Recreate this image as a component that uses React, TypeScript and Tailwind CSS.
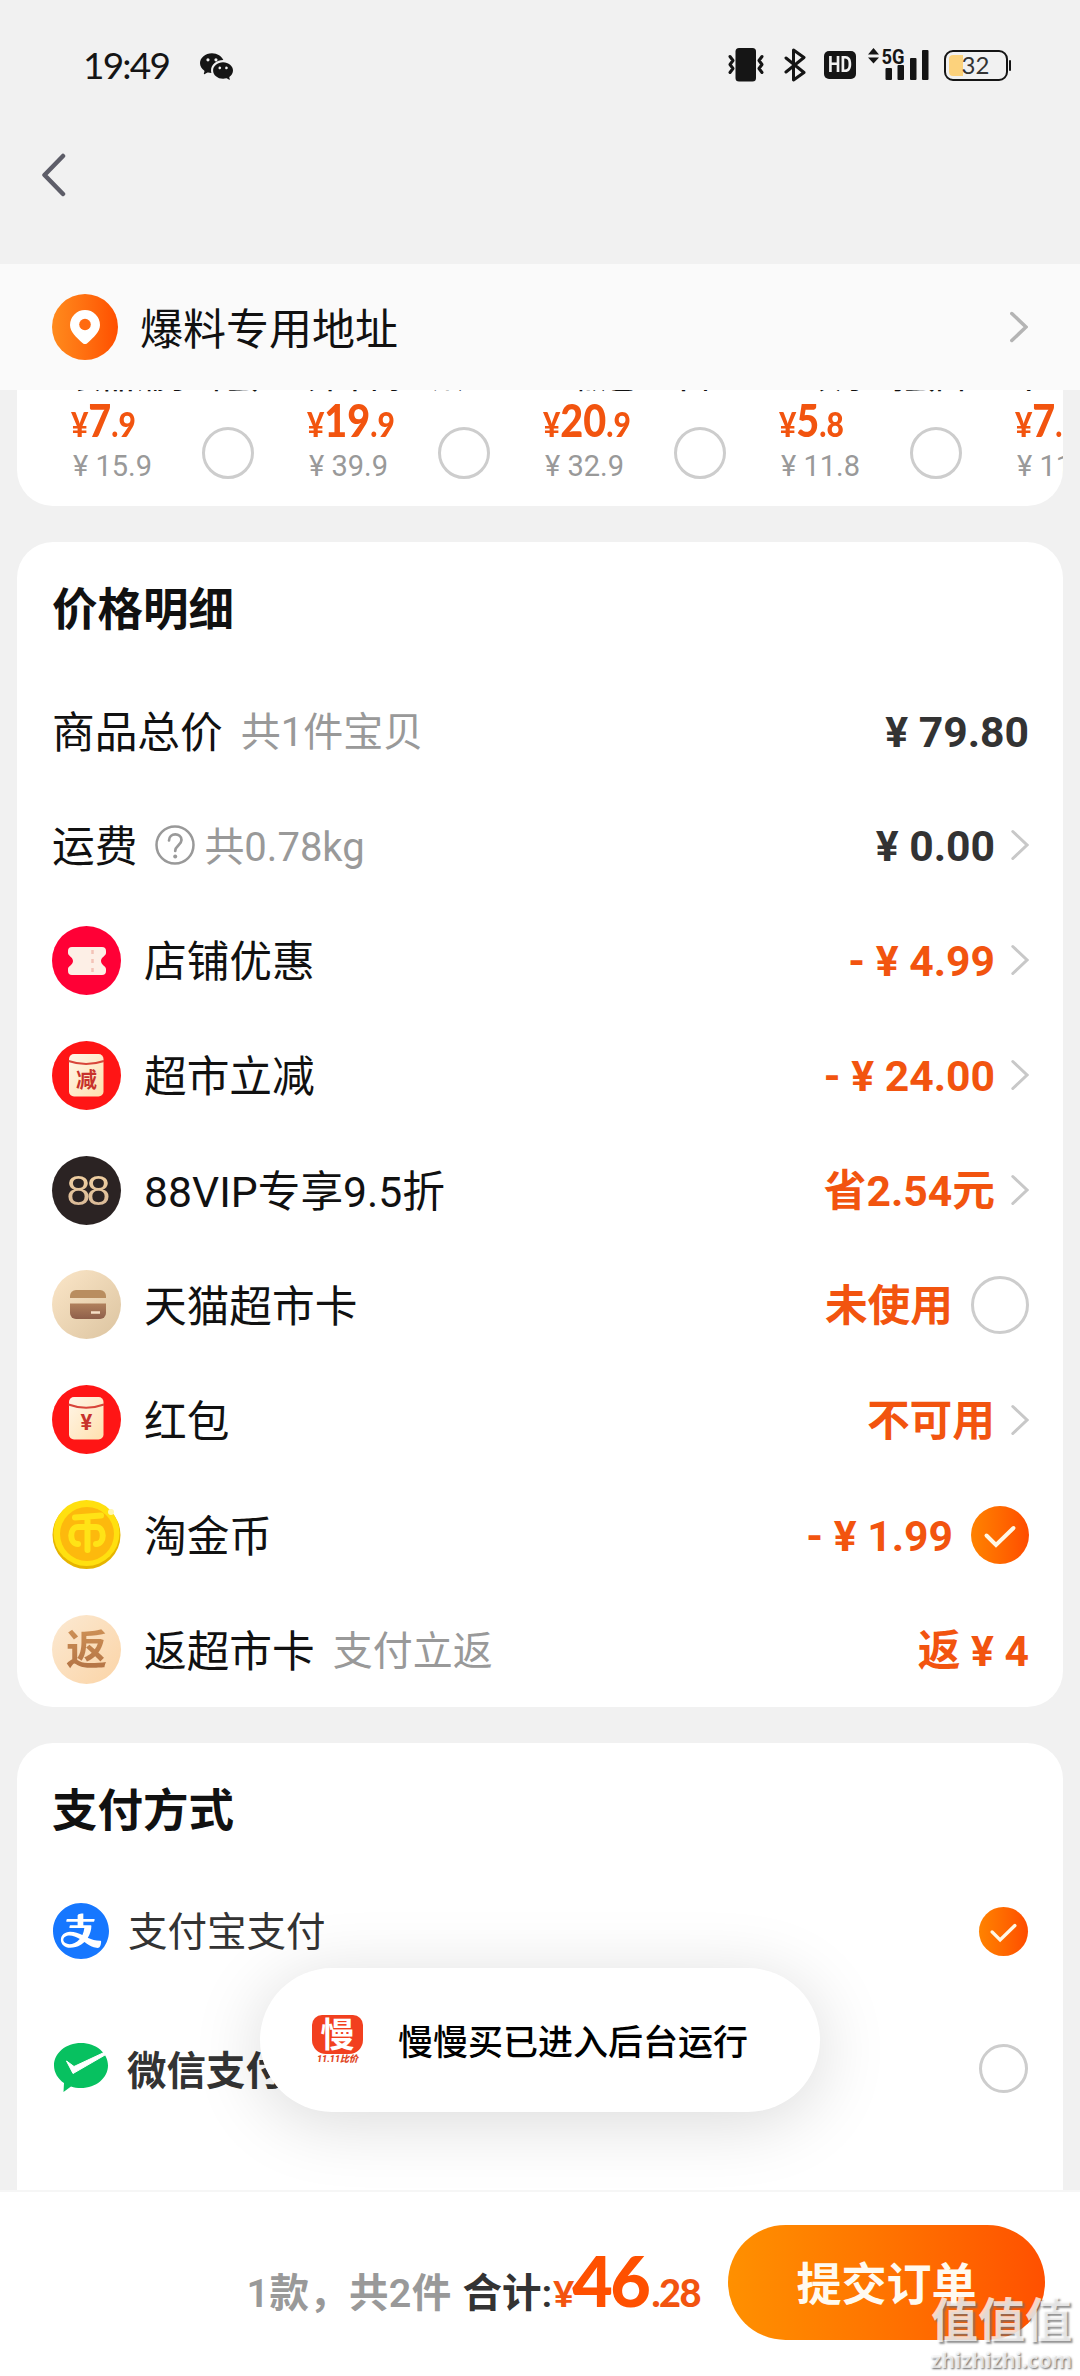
import type { ReactNode } from "react";
import { AiFillAlipayCircle } from "react-icons/ai";
import { BsWechat } from "react-icons/bs";

type Product = { name: string; int: string; dec: string; old: string };

const products: Product[] = [
  { name: "食品铺子虾蛋", int: "7", dec: ".9", old: "15.9" },
  { name: "卉牛肉丝爪", int: "19", dec: ".9", old: "39.9" },
  { name: "生椒巴旦不但", int: "20", dec: ".9", old: "32.9" },
  { name: "三灰小鸡蛋面", int: "5", dec: ".8", old: "11.8" },
  { name: "卜卦", int: "7", dec: ".9", old: "11.9" },
];

const IconChevron = ({ className = "text-[#c8c8c8]", width = 3 }: { className?: string; width?: number }) => (
  <svg viewBox="0 0 18 32" fill="none" className={`h-8 w-[18px] shrink-0 ${className}`}>
    <path d="M1.8 2.5 16 16 1.8 29.5" stroke="currentColor" strokeWidth={width} strokeLinecap="round" />
  </svg>
);

const Radio = ({ className }: { className: string }) => (
  <div className={`shrink-0 rounded-full border-[3px] border-[#cdcdcd] bg-white ${className}`} />
);

const Checked = ({ className }: { className: string }) => (
  <div
    className={`flex shrink-0 items-center justify-center rounded-full bg-linear-to-r from-[#ff8200] to-[#ff4b00] ${className}`}
  >
    <svg viewBox="0 0 58 58" fill="none" className="size-full">
      <path d="M15.5 29.5 25 39 42.5 22" stroke="#fff8e6" strokeWidth="4" strokeLinecap="round" />
    </svg>
  </div>
);

const IconTicket = () => (
  <svg viewBox="0 0 69 69" className="size-[69px]">
    <circle cx="34.5" cy="34.5" r="34.5" fill="#ff0036" />
    <path
      d="M20 21h30a4 4 0 0 1 4 4v2c0 3-5 4-5 8s5 5 5 8v2a4 4 0 0 1-4 4H20a4 4 0 0 1-4-4v-2c0-3 5-4 5-8s-5-5-5-8v-2a4 4 0 0 1 4-4z"
      fill="#fdefe6"
    />
    <path d="M40.500 24v23" stroke="#f3c3b8" strokeWidth="2.500" strokeDasharray="4 5" />
  </svg>
);

const IconPacket = ({ label, dy = 0 }: { label: string; dy?: number }) => (
  <svg viewBox="0 0 69 69" className="size-[69px]">
    <defs>
      <linearGradient id="packet" x1="0" y1="0" x2="1" y2="1">
        <stop offset="0" stopColor="#fff6e8" />
        <stop offset="1" stopColor="#ffe0ae" />
      </linearGradient>
    </defs>
    <circle cx="34.500" cy="34.500" r="34.500" fill="#ff1515" />
    <rect x="17" y={13 + dy} width="34.500" height="42.500" rx="5" fill="url(#packet)" />
    <path d={dy ? "M16.500 19.500Q34 26 52 19.500" : "M16.500 20Q34 26 52 20"} stroke="#d8453a" strokeWidth="2" fill="none" />
    <text
      x="34.500"
      y={label === "减" ? 46 : 45}
      textAnchor="middle"
      fontSize={label === "减" ? 21 : 22}
      fontWeight="700"
      fill="#c8322c"
      className="font-['Roboto','Noto_Sans_CJK_SC',sans-serif]"
    >
      {label}
    </text>
  </svg>
);

const Icon88 = () => (
  <div className="flex size-[69px] items-center justify-center rounded-full bg-[#2b2323]">
    <span className="bg-linear-to-b from-[#f7d6a4] to-[#d3b394] bg-clip-text px-1 font-['Liberation_Sans',sans-serif] text-[43px] leading-[48px] tracking-[-4px] text-transparent">
      88
    </span>
  </div>
);

const IconCard = () => (
  <svg viewBox="0 0 69 69" className="size-[69px]">
    <defs>
      <linearGradient id="cardBg" x1="0" y1="0" x2="1" y2="1">
        <stop offset="0" stopColor="#fbe6c8" />
        <stop offset="1" stopColor="#dcc4a0" />
      </linearGradient>
      <linearGradient id="cardFg" x1="0" y1="0" x2="0" y2="1">
        <stop offset="0" stopColor="#b0805c" />
        <stop offset="1" stopColor="#8f5f4a" />
      </linearGradient>
    </defs>
    <circle cx="34.500" cy="34.500" r="34.500" fill="url(#cardBg)" />
    <path d="M18 28v-2a6 6 0 0 1 6-6h24a6 6 0 0 1 6 6v2z" fill="#b98d5f" />
    <path d="M18 33.500h36V43a6 6 0 0 1-6 6H24a6 6 0 0 1-6-6z" fill="url(#cardFg)" />
    <path d="M39 42.500h9" stroke="#f6dfc6" strokeWidth="2.500" />
  </svg>
);

const IconCoin = () => (
  <svg viewBox="0 0 69 69" className="size-[69px]">
    <circle cx="34.500" cy="35" r="34" fill="#e6b400" />
    <circle cx="34.500" cy="33" r="33" fill="#ffe00f" />
    <circle cx="35" cy="34" r="27" fill="#fdb90d" />
    <g stroke="#ffe316" strokeWidth="6" fill="none" strokeLinecap="round">
      <path d="M23 17.500 49 15.500M35.500 17v33" />
      <path d="M26 44c-9 0-9-17 0-17h18c9 0 9 17 0 17" />
    </g>
    <circle cx="59" cy="12" r="3" fill="#fff7b0" />
  </svg>
);

const IconReturn = () => (
  <div className="flex size-[69px] items-center justify-center rounded-full bg-linear-to-br from-[#fbe9d2] to-[#fbd4a6]">
    <span className="bg-linear-to-b from-[#cf9257] to-[#b07043] bg-clip-text text-[41px] leading-[48px] font-bold text-transparent">返</span>
  </div>
);

const IconWechatPay = () => (
  <svg viewBox="0 0 54 50" className="h-[50px] w-[54px]">
    <path
      d="M27 0c15 0 27 10 27 22.500S42 45 27 45c-3.500 0-7-.5-10-1.600L9.500 49l.5-9C4 36 0 29.500 0 22.500 0 10 12 0 27 0z"
      fill="#07c160"
    />
    <path d="M12.500 18 20 23.500 50 9.500 51 12 19 30.500z" fill="#fff" stroke="#fff" strokeLinejoin="round" />
  </svg>
);

const StatusBar = () => (
  <div className="flex h-[130px] items-center pr-[69px] pl-[83px]">
    <span className="w-[87px] font-['Lato',sans-serif] text-[37px] tracking-[-1.8px] whitespace-nowrap text-[#151515]">19:49</span>
    <BsWechat className="ml-[30px] size-[33px] text-[#151515]" />

    <div className="ml-auto flex items-center text-[#151515]">
      <svg viewBox="0 0 36 34" fill="none" className="h-[34px] w-9">
        <rect x="7.500" width="20.500" height="33.500" rx="3.500" fill="currentColor" />
        <path d="M2 8.500l3 4-3 4 3 4-3 4M34 8.500l-3 4 3 4-3 4 3 4" stroke="currentColor" strokeWidth="3" strokeLinecap="round" strokeLinejoin="round" />
      </svg>
      <svg viewBox="0 0 22 34" fill="none" className="ml-5 h-[34px] w-[22px]">
        <path d="M2 10 20 24.500 9.500 32V2L20 9.500 2 24" stroke="currentColor" strokeWidth="3" strokeLinecap="round" strokeLinejoin="round" />
      </svg>
      <span className="ml-[18px] flex h-7 w-8 items-center justify-center rounded-[5px] bg-[#151515] font-['Roboto',sans-serif] text-[22px] leading-none font-bold text-[#f1f1f1]">
        <span className="scale-x-80">HD</span>
      </span>
      <svg viewBox="0 0 61 34" fill="currentColor" className="ml-3 h-[34px] w-[61px] overflow-visible">
        <path d="M5.500 0 11 6.500H0zM5.500 15.500 11 9.500H0z" />
        <text x="13.500" y="15.500" fontSize="21" fontWeight="700" textLength="23" lengthAdjust="spacingAndGlyphs" className="font-['Roboto',sans-serif]">
          5G
        </text>
        <rect x="17.500" y="20" width="6.500" height="12" rx="1" />
        <rect x="29.500" y="17" width="6.500" height="15" rx="1" />
        <rect x="42" y="10" width="6.500" height="22" rx="1" />
        <rect x="54" y="2" width="6.500" height="30" rx="1" />
      </svg>
      <div className="ml-[15px] flex h-[31px] w-[64px] items-center rounded-[9px] border-[2.5px] border-[#151515] pl-[3px]">
        <div className="h-[21px] w-[14px] rounded-l-[4px] bg-[#fcd27c]" />
        <span className="-ml-px font-['Lato',sans-serif] text-[24px] leading-none text-[#333]">32</span>
      </div>
      <div className="ml-px h-[11px] w-[2.5px] rounded-sm bg-[#151515]" />
    </div>
  </div>
);

const AddressBar = () => (
  <div className="flex h-[126px] items-center bg-[#fafafa] px-[52px]">
    <div className="flex size-[66px] items-center justify-center rounded-full bg-linear-to-r from-[#ff8a1c] to-[#ff4e00]">
      <svg viewBox="0 0 30 34" className="h-[34px] w-[30px]">
        <path d="M15 0a15 15 0 0 1 15 15c0 7-6.500 12.500-12.500 18a3.500 3.500 0 0 1-5 0C6.500 27.500 0 22 0 15A15 15 0 0 1 15 0z" fill="#fff" />
        <circle cx="15" cy="14.500" r="5.800" fill="#ff6a10" />
      </svg>
    </div>
    <span className="ml-[22px] pt-[6px] text-[43px] leading-none text-[#111]">爆料专用地址</span>
    <IconChevron className="ml-auto text-[#b4b4b4]" width={3.5} />
  </div>
);

const ProductCard = ({ name, int, dec, old }: Product) => (
  <div className="w-[236px] shrink-0">
    <p className="-mt-[31px] h-[38px] text-[31px] leading-[38px] font-medium whitespace-nowrap text-[#111]">{name}</p>
    <div className="relative">
      <p className="-ml-px h-[46px] origin-left scale-x-[0.88] font-['Lato',sans-serif] text-[34px] leading-[46px] font-black whitespace-nowrap text-[#f2540f]">
        ¥<span className="text-[45px]">{int}</span>
        {dec}
      </p>
      <p className="mt-[6px] pl-px text-[29px] leading-[34px] whitespace-nowrap text-[#999]">¥ {old}</p>
      <Radio className="absolute top-[30px] left-[130px] size-[52px]" />
    </div>
  </div>
);

type RowProps = {
  icon?: ReactNode;
  label: string;
  note?: string;
  help?: boolean;
  value: string;
  end?: "chevron" | "radio" | "checked";
  accent?: boolean;
};

const PriceRow = ({ icon, label, note, help, value, end, accent = true }: RowProps) => (
  <div className="flex flex-1 items-center">
    {icon && <div className="mr-[23px] shrink-0">{icon}</div>}
    <span className="pt-[5px] text-[42.7px] leading-none text-[#111]">{label}</span>
    {help && (
      <svg viewBox="0 0 40 40" fill="none" className="ml-[18px] size-10 text-[#999]">
        <circle cx="20" cy="20" r="18.500" stroke="currentColor" strokeWidth="2.500" />
        <path d="M14 15.500c0-8 12.500-8 12.500-.5 0 5-6.300 5.500-6.300 11" stroke="currentColor" strokeWidth="2.700" strokeLinecap="round" />
        <circle cx="20.200" cy="31.500" r="2" fill="currentColor" />
      </svg>
    )}
    {note && <span className={`pt-[5px] text-[40px] leading-none text-[#999] ${help ? "ml-[9px]" : "ml-[18px]"}`}>{note}</span>}

    <div className="ml-auto flex items-center">
      <span className={`pt-[3px] text-[42.7px] leading-none font-bold whitespace-pre ${accent ? "text-[#f2540f]" : "text-[#333]"}`}>
        {value}
      </span>
      {end === "chevron" && (
        <div className="ml-4">
          <IconChevron />
        </div>
      )}
      {end === "radio" && <Radio className="ml-[18px] size-[58px]" />}
      {end === "checked" && <Checked className="ml-[18px] size-[58px]" />}
    </div>
  </div>
);

const PriceDetails = () => (
  <section className="mx-[17px] mt-9 flex h-[1165px] flex-col rounded-[36px] bg-white pr-[34px] pl-[35px]">
    <h2 className="flex h-[131px] items-center pt-[6px] text-[45.5px] leading-none font-bold text-[#111]">价格明细</h2>
    <PriceRow label="商品总价" note="共1件宝贝" value="¥ 79.80" accent={false} />
    <PriceRow label="运费" help note="共0.78kg" value="¥ 0.00" end="chevron" accent={false} />
    <PriceRow icon={<IconTicket />} label="店铺优惠" value="- ¥ 4.99" end="chevron" />
    <PriceRow icon={<IconPacket label="减" />} label="超市立减" value="- ¥ 24.00" end="chevron" />
    <PriceRow icon={<Icon88 />} label="88VIP专享9.5折" value="省2.54元" end="chevron" />
    <PriceRow icon={<IconCard />} label="天猫超市卡" value="未使用" end="radio" />
    <PriceRow icon={<IconPacket label="¥" dy={-1} />} label="红包" value="不可用" end="chevron" />
    <PriceRow icon={<IconCoin />} label="淘金币" value="- ¥ 1.99" end="checked" />
    <PriceRow icon={<IconReturn />} label="返超市卡" note="支付立返" value="返 ¥ 4" />
  </section>
);

const PaymentMethods = () => (
  <section className="mx-[17px] mt-9 h-[447px] rounded-t-[36px] bg-white px-[35px]">
    <h2 className="flex h-[119px] items-center pt-[18px] text-[45.5px] leading-none font-bold text-[#111]">支付方式</h2>
    <div className="flex h-[138px] items-center">
      <AiFillAlipayCircle className="-ml-[3px] size-[64px] text-[#1677ff]" />
      <span className="ml-[15px] pt-[4px] text-[39.5px] leading-none text-[#333]">支付宝支付</span>
      <Checked className="ml-auto size-[49px]" />
    </div>
    <div className="flex h-[136px] items-center">
      <div className="ml-[2px]">
        <IconWechatPay />
      </div>
      <span className="ml-[19px] pt-[7px] text-[39.5px] leading-none font-bold text-[#333]">微信支付</span>
      <Radio className="ml-auto size-[49px]" />
    </div>
  </section>
);

const Toast = () => (
  <div className="absolute top-[1968px] left-[260px] flex h-[144px] w-[560px] items-center rounded-full bg-white pl-[52px] shadow-[0_10px_70px_rgba(0,0,0,0.15)]">
    <div className="flex w-[51px] flex-col items-center">
      <span className="flex h-[39px] w-[51px] items-center justify-center rounded-[10px] rounded-b-[14px] bg-[#f2401f] text-[34px] leading-none font-bold text-white">
        慢
      </span>
      <span className="text-[9px] leading-[11px] font-black whitespace-nowrap text-[#e0461f] italic">11.11比价</span>
    </div>
    <span className="ml-[35px] pt-[6px] text-[35px] leading-none font-medium text-black">慢慢买已进入后台运行</span>
  </div>
);

const Footer = () => (
  <footer className="flex h-[186px] items-center border-t-2 border-[#f6f6f6] bg-white pr-[35px] pb-1">
    <div className="ml-auto flex items-baseline pb-1 text-[39.5px] leading-none font-semibold whitespace-nowrap">
      <span className="tracking-[0.3px] text-[#999]">1款，共2件</span>
      <span className="ml-[11px] text-[#333]">合计:</span>
      <span className="ml-px font-['Lato',sans-serif] text-[36px] font-black tracking-[-2px] text-[#f2540f]">¥</span>
      <span className="font-['Lato',sans-serif] text-[70px] font-black tracking-[-2.5px] text-[#ff5000]">46</span>
      <span className="ml-[3px] font-['Lato',sans-serif] text-[38px] font-black tracking-[-1.5px] text-[#f2540f]">.28</span>
    </div>
    <button className="ml-[28px] h-[115px] w-[317px] rounded-full bg-linear-to-r from-[#ff9000] to-[#ff5000] pt-[6px] text-[45px] leading-none font-bold text-[#fffaf0]">
      提交订单
    </button>
  </footer>
);

const Watermark = () => (
  <div className="absolute right-[8px] bottom-[2px] text-right leading-none font-bold text-white/75">
    <p className="text-[47px] leading-[50px] [text-shadow:2px_2px_2px_rgba(110,110,110,0.75)]">值值值</p>
    <p className="font-['Noto_Sans',sans-serif] text-[21px] leading-[28px] [text-shadow:1px_1px_2px_rgba(90,90,90,0.9)]">zhizhizhi.com</p>
  </div>
);

export default function App() {
  return (
    <div className="relative h-[2376px] w-[1080px] overflow-hidden bg-[#f1f1f1] font-['Roboto','Noto_Sans_CJK_SC',sans-serif]">
      <header className="h-[264px]">
        <StatusBar />
        <svg viewBox="0 0 26 44" fill="none" className="mt-[23px] ml-[40px] h-11 w-[26px]">
          <path d="M23 3 4.500 22 23 41" stroke="#5d5d68" strokeWidth="4.500" strokeLinecap="round" strokeLinejoin="round" />
        </svg>
      </header>

      <AddressBar />

      <section className="mx-[17px] flex h-[116px] overflow-hidden rounded-b-[36px] bg-white pl-[55px]">
        {products.map((product) => (
          <ProductCard key={product.name} {...product} />
        ))}
      </section>

      <PriceDetails />
      <PaymentMethods />
      <Footer />

      <Toast />
      <Watermark />
    </div>
  );
}
